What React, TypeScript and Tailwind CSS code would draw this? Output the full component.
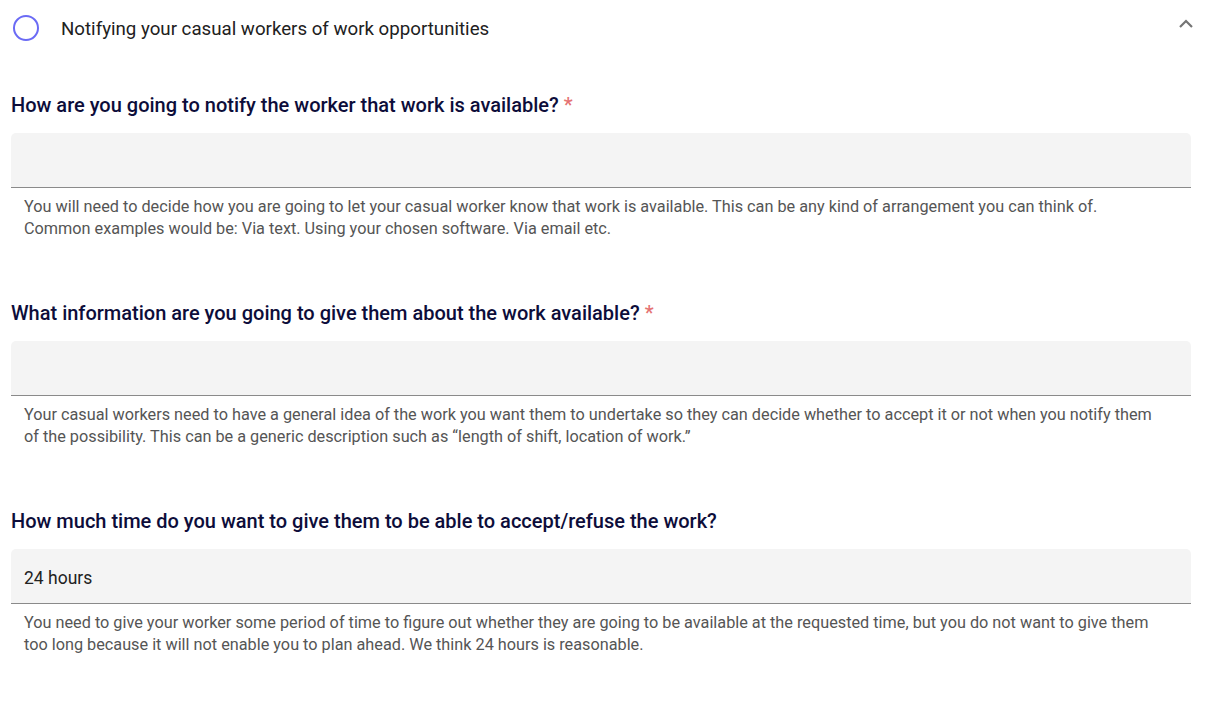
import { useState } from "react";

const questions = [
  {
    id: "notify",
    label: "How are you going to notify the worker that work is available?",
    required: true,
    value: "",
    help: "You will need to decide how you are going to let your casual worker know that work is available. This can be any kind of arrangement you can think of. Common examples would be: Via text. Using your chosen software. Via email etc.",
  },
  {
    id: "info",
    label: "What information are you going to give them about the work available?",
    required: true,
    value: "",
    help: "Your casual workers need to have a general idea of the work you want them to undertake so they can decide whether to accept it or not when you notify them of the possibility. This can be a generic description such as \u201clength of shift, location of work.\u201d",
  },
  {
    id: "time",
    label: "How much time do you want to give them to be able to accept/refuse the work?",
    required: false,
    value: "24 hours",
    help: "You need to give your worker some period of time to figure out whether they are going to be available at the requested time, but you do not want to give them too long because it will not enable you to plan ahead. We think 24 hours is reasonable.",
  },
];

function Field({ q }: { q: any }) {
  const [val, setVal] = useState(q.value);
  return (
    <div className="flex flex-col">
      <label className="text-[20px] leading-[28px] font-medium text-[#0d0d3a] pl-[11px]">
        {q.label}
        {q.required && <span className="text-[#e57373]"> *</span>}
      </label>
      <input
        value={val}
        onChange={(e) => setVal(e.target.value)}
        className="mt-[14px] ml-[11px] w-[1180px] h-[55px] bg-[#f4f4f4] rounded-t-[5px] border-b border-[#8a8a8a] px-[13px] pt-[3px] text-[17.5px] text-[#222] outline-none"
      />
      <p className="mt-[8px] pl-[24px] pr-[58px] text-[16.25px] leading-[22px] text-[#555]">
        {q.help}
      </p>
    </div>
  );
}

export default function App() {
  return (
    <div className="w-[1214px] h-[701px] bg-white overflow-hidden" style={{ fontFamily: "Roboto, 'Liberation Sans', sans-serif" }}>
      {/* accordion header */}
      <div className="flex items-center h-[56px] pr-[20px]">
        <div className="ml-[13px] w-[26px] h-[26px] rounded-full border-[2.5px] border-[#6b6bf5]" />
        <span className="ml-[22px] pt-[2px] text-[18.7px] text-[#212121]">
          Notifying your casual workers of work opportunities
        </span>
        <svg className="ml-auto mb-[8px]" width="16" height="10" viewBox="0 0 16 10" fill="none">
          <path d="M2 8 L8 2 L14 8" stroke="#757575" strokeWidth="2.2" />
        </svg>
      </div>

      <div className="flex flex-col gap-[59px] mt-[35px]">
        {questions.map((q) => (
          <Field key={q.id} q={q} />
        ))}
      </div>
    </div>
  );
}
